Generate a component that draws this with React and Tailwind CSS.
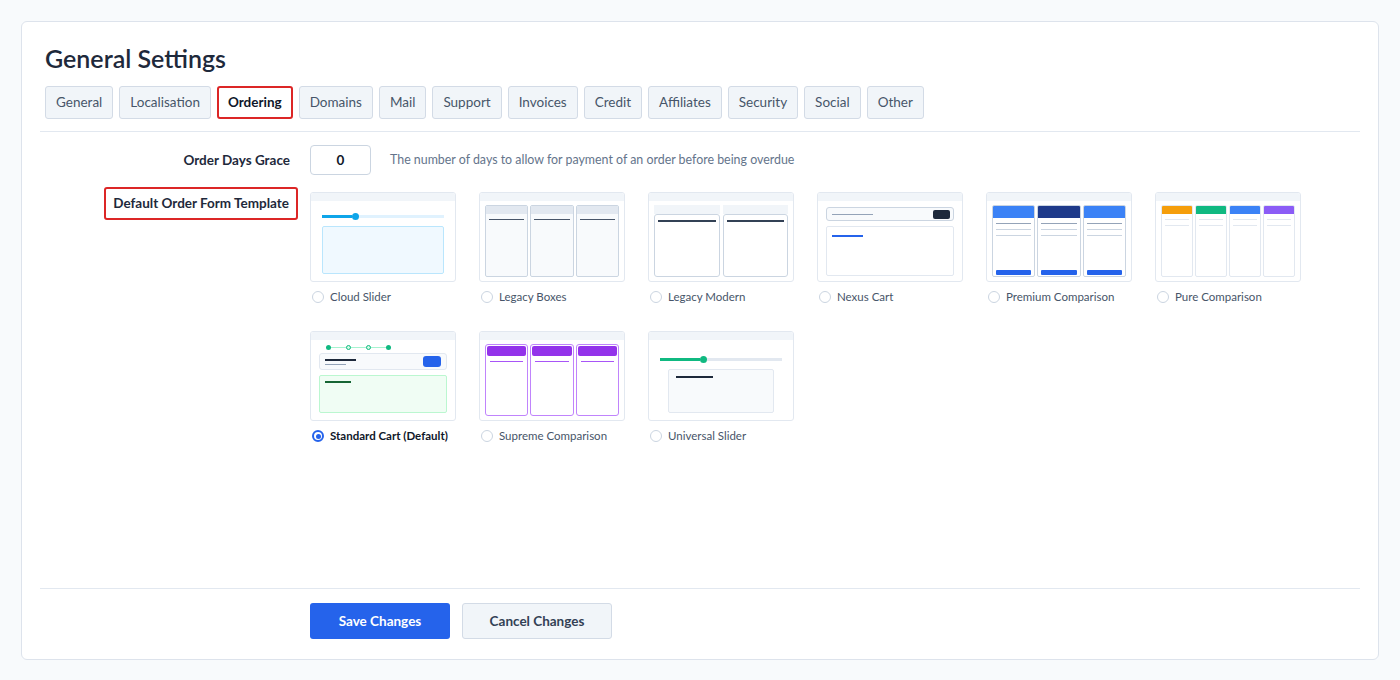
import React, { useState } from 'react';

const tabs = ['General', 'Localisation', 'Ordering', 'Domains', 'Mail', 'Support', 'Invoices', 'Credit', 'Affiliates', 'Security', 'Social', 'Other'];

// Thumbnail previews for each template
function Thumb({ children }) {
  return (
    <div className="w-[146px] h-[90px] bg-white border border-[#e2e8f0] rounded-[3px] flex flex-col overflow-hidden">
      <div className="h-[8px] bg-[#f1f5f9] shrink-0"></div>
      {children}
    </div>
  );
}

function CloudSlider() {
  return (
    <Thumb>
      <div className="px-[11px] pt-[12px]">
        <div className="flex items-center h-[7px]">
          <div className="w-[30px] h-[3px] bg-[#0ea5e9]"></div>
          <div className="w-[7px] h-[7px] rounded-full bg-[#0ea5e9]"></div>
          <div className="flex-1 h-[3px] bg-[#e0f2fe]"></div>
        </div>
        <div className="mt-[6px] h-[48px] bg-[#f0f9ff] border border-[#bae6fd] rounded-[2px]"></div>
      </div>
    </Thumb>
  );
}

function LegacyBoxes() {
  return (
    <Thumb>
      <div className="px-[5px] pt-[4px] grid grid-cols-3 gap-[2px]">
        {[0, 1, 2].map((i) => (
          <div key={i} className="h-[72px] bg-[#f8fafc] border border-[#cbd5e1] rounded-[2px] overflow-hidden">
            <div className="h-[8px] bg-[#e2e8f0]"></div>
            <div className="mt-[5px] mx-[3px] h-[1px] bg-[#475569]"></div>
          </div>
        ))}
      </div>
    </Thumb>
  );
}

function LegacyModern() {
  return (
    <Thumb>
      <div className="px-[5px] pt-[4px] grid grid-cols-2 gap-[3px]">
        {[0, 1].map((i) => (
          <div key={i} className="h-[72px] flex flex-col">
            <div className="h-[9px] bg-[#f1f5f9]"></div>
            <div className="flex-1 bg-white border border-[#cbd5e1] rounded-[3px]">
              <div className="mt-[5px] mx-[3px] h-[2px] bg-[#334155]"></div>
            </div>
          </div>
        ))}
      </div>
    </Thumb>
  );
}

function NexusCart() {
  return (
    <Thumb>
      <div className="px-[8px] pt-[6px]">
        <div className="h-[14px] flex items-center justify-between px-[5px] bg-[#f8fafc] border border-[#cbd5e1] rounded-[3px]">
          <div className="w-[41px] h-[1px] bg-[#94a3b8]"></div>
          <div className="w-[17px] h-[9px] rounded-[2px] bg-[#1e293b] -mr-[2px]"></div>
        </div>
        <div className="mt-[5px] h-[50px] bg-white border border-[#e2e8f0] rounded-[2px]">
          <div className="mt-[8px] ml-[5px] w-[31px] h-[2px] bg-[#2563eb]"></div>
        </div>
      </div>
    </Thumb>
  );
}

function PremiumComparison() {
  const heads = ['bg-[#3b82f6]', 'bg-[#1e3a8a]', 'bg-[#3b82f6]'];
  return (
    <Thumb>
      <div className="px-[5px] pt-[4px] grid grid-cols-3 gap-[2px]">
        {heads.map((h, i) => (
          <div key={i} className="h-[72px] flex flex-col bg-white border border-[#cbd5e1] rounded-[2px] overflow-hidden">
            <div className={'h-[12px] ' + h}></div>
            <div className="mt-[5px] mx-[3px] h-[1px] bg-[#94a3b8]"></div>
            <div className="mt-[5px] mx-[3px] h-[1px] bg-[#cbd5e1]"></div>
            <div className="mt-[5px] mx-[3px] h-[1px] bg-[#cbd5e1]"></div>
            <div className="mt-auto mb-[1px] mx-[3px] h-[5px] bg-[#2563eb] rounded-[1px]"></div>
          </div>
        ))}
      </div>
    </Thumb>
  );
}

function PureComparison() {
  const heads = ['bg-[#f59e0b]', 'bg-[#10b981]', 'bg-[#3b82f6]', 'bg-[#8b5cf6]'];
  return (
    <Thumb>
      <div className="px-[5px] pt-[4px] grid grid-cols-4 gap-[2px]">
        {heads.map((h, i) => (
          <div key={i} className="h-[72px] bg-white border border-[#e2e8f0] rounded-[2px] overflow-hidden">
            <div className={'h-[8px] ' + h}></div>
            <div className="mt-[5px] mx-[3px] h-[1px] bg-[#e2e8f0]"></div>
            <div className="mt-[5px] mx-[3px] h-[1px] bg-[#e2e8f0]"></div>
          </div>
        ))}
      </div>
    </Thumb>
  );
}

function StandardCart() {
  return (
    <Thumb>
      <div className="px-[8px] pt-[5px]">
        <div className="ml-[7px] w-[65px] h-[5px] flex items-center justify-between relative">
          <div className="absolute left-0 right-0 top-[2px] h-[1px] bg-[#a7f3d0]"></div>
          <div className="relative w-[5px] h-[5px] rounded-full bg-[#10b981]"></div>
          <div className="relative w-[5px] h-[5px] rounded-full border border-[#10b981] bg-[#d1fae5]"></div>
          <div className="relative w-[5px] h-[5px] rounded-full border border-[#10b981] bg-[#d1fae5]"></div>
          <div className="relative w-[5px] h-[5px] rounded-full bg-[#10b981]"></div>
        </div>
        <div className="mt-[3px] h-[17px] flex items-center justify-between px-[5px] bg-[#f8fafc] border border-[#e2e8f0] rounded-[3px]">
          <div className="flex flex-col gap-[3px]">
            <div className="w-[31px] h-[2px] bg-[#1e293b]"></div>
            <div className="w-[21px] h-[1px] bg-[#94a3b8]"></div>
          </div>
          <div className="w-[18px] h-[11px] rounded-[3px] bg-[#2563eb]"></div>
        </div>
        <div className="mt-[5px] h-[38px] bg-[#f0fdf4] border border-[#bbf7d0] rounded-[2px]">
          <div className="mt-[5px] ml-[5px] w-[26px] h-[2px] bg-[#166534]"></div>
        </div>
      </div>
    </Thumb>
  );
}

function SupremeComparison() {
  return (
    <Thumb>
      <div className="px-[5px] pt-[4px] grid grid-cols-3 gap-[2px]">
        {[0, 1, 2].map((i) => (
          <div key={i} className="h-[72px] bg-white border border-[#c084fc] rounded-[3px] p-[1px]">
            <div className="h-[10px] bg-[#9333ea] rounded-[2px]"></div>
            <div className="mt-[5px] mx-[3px] h-[1px] bg-[#a855f7]"></div>
          </div>
        ))}
      </div>
    </Thumb>
  );
}

function UniversalSlider() {
  return (
    <Thumb>
      <div className="px-[11px] pt-[16px]">
        <div className="flex items-center h-[7px]">
          <div className="w-[40px] h-[3px] bg-[#10b981]"></div>
          <div className="w-[7px] h-[7px] rounded-full bg-[#10b981]"></div>
          <div className="flex-1 h-[3px] bg-[#e2e8f0]"></div>
        </div>
        <div className="mt-[6px] mx-[8px] h-[44px] bg-[#f8fafc] border border-[#e2e8f0] rounded-[2px]">
          <div className="mt-[6px] ml-[7px] w-[37px] h-[2px] bg-[#1e293b]"></div>
        </div>
      </div>
    </Thumb>
  );
}

const templates = [
  { name: 'Cloud Slider', Preview: CloudSlider },
  { name: 'Legacy Boxes', Preview: LegacyBoxes },
  { name: 'Legacy Modern', Preview: LegacyModern },
  { name: 'Nexus Cart', Preview: NexusCart },
  { name: 'Premium Comparison', Preview: PremiumComparison },
  { name: 'Pure Comparison', Preview: PureComparison },
  { name: 'Standard Cart (Default)', Preview: StandardCart },
  { name: 'Supreme Comparison', Preview: SupremeComparison },
  { name: 'Universal Slider', Preview: UniversalSlider },
];

export default function App() {
  const [selected, setSelected] = useState('Standard Cart (Default)');

  return (
    <div className="min-h-screen bg-[#f8fafc] p-[21px] font-['Lato',sans-serif]">
      <div className="h-[639px] bg-white border border-[#dde3ec] rounded-[6px] px-[18px] pt-[20px] pb-[20px] flex flex-col">
        {/* Header */}
        <div className="px-[5px]">
          <h1 className="text-[25px] leading-[32px] font-semibold text-[#1e293b]">General Settings</h1>
          <div className="mt-[12px] flex gap-[6px]">
            {tabs.map((t) =>
              t === 'Ordering' ? (
                <button key={t} className="h-[33px] px-[9px] rounded-[3px] bg-white border-2 border-[#dc2626] text-[13.5px] font-bold text-[#0f172a]">
                  {t}
                </button>
              ) : (
                <button key={t} className="h-[33px] px-[10px] rounded-[3px] bg-[#f1f5f9] border border-[#d3dbe6] text-[13.5px] text-[#475569]">
                  {t}
                </button>
              )
            )}
          </div>
        </div>

        <div className="mt-[12px] h-[1px] bg-[#e2e8f0]"></div>

        {/* Order days grace */}
        <div className="mt-[13px] flex items-center">
          <div className="w-[258px] flex justify-end">
            <span className="px-[8px] text-[13.5px] font-bold text-[#1e293b]">Order Days Grace</span>
          </div>
          <div className="ml-[12px] w-[61px] h-[30px] flex items-center justify-center border border-[#cbd5e1] rounded-[4px] text-[13.5px] font-bold text-[#0f172a]">
            0
          </div>
          <span className="ml-[19px] text-[12.4px] text-[#64748b]">The number of days to allow for payment of an order before being overdue</span>
        </div>

        {/* Default order form template */}
        <div className="mt-[12px] flex items-start">
          <div className="w-[258px] flex justify-end">
            <span className="h-[33px] flex items-center px-[7px] border-2 border-[#dc2626] rounded-[3px] text-[13.5px] font-bold text-[#1e293b]">
              Default Order Form Template
            </span>
          </div>
          <div className="ml-[12px] pt-[5px] grid grid-cols-[repeat(6,145px)] gap-x-[24px] gap-y-[26px]">
            {templates.map(({ name, Preview }) => {
              const on = selected === name;
              return (
                <label key={name} className="flex flex-col cursor-pointer" onClick={() => setSelected(name)}>
                  <Preview />
                  <div className="mt-[7px] h-[16px] flex items-center whitespace-nowrap">
                    {on ? (
                      <span className="ml-[2px] w-[12px] h-[12px] shrink-0 rounded-full border-2 border-[#2563eb] flex items-center justify-center">
                        <span className="w-[5px] h-[5px] rounded-full bg-[#2563eb]"></span>
                      </span>
                    ) : (
                      <span className="ml-[2px] w-[12px] h-[12px] shrink-0 rounded-full border border-[#cbd5e1] bg-white"></span>
                    )}
                    <span className={'ml-[6px] text-[11.5px] ' + (on ? 'font-bold text-[#0f172a]' : 'text-[#475569]')}>{name}</span>
                  </div>
                </label>
              );
            })}
          </div>
        </div>

        <div className="flex-1"></div>

        <div className="h-[1px] bg-[#e2e8f0]"></div>

        {/* Actions */}
        <div className="mt-[14px] pl-[270px] flex gap-[12px]">
          <button className="w-[140px] h-[36px] rounded-[3px] bg-[#2563eb] text-white text-[13.5px] font-bold">Save Changes</button>
          <button className="w-[150px] h-[36px] rounded-[3px] bg-[#f1f5f9] border border-[#d3dbe6] text-[#334155] text-[13.5px] font-bold">Cancel Changes</button>
        </div>
      </div>
    </div>
  );
}
